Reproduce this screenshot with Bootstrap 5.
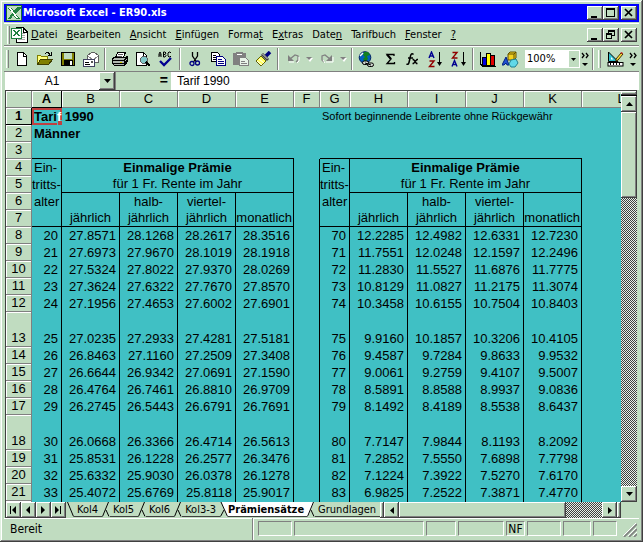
<!DOCTYPE html>
<html lang="de">
<head>
<meta charset="utf-8">
<meta name="viewport" content="width=device-width, initial-scale=1">
<title>Microsoft Excel - ER90.xls</title>
<link href="https://cdn.jsdelivr.net/npm/bootstrap@5.3.0/dist/css/bootstrap.min.css" rel="stylesheet">
<style>
:root{--face:#c0dcc0;--sea:#40c0c4;--sh:#808080;--dk:#404040;--ui:"DejaVu Sans Condensed","DejaVu Sans",sans-serif;--cell:"Liberation Sans",Arial,sans-serif}
body{background:var(--face);color:#000;font:11px/14px var(--ui)}
button,input,select{font:inherit;color:#000;padding:0;border:0;border-radius:0;background:none;min-width:0}
svg{display:block;flex:none}
.win{padding:4px;background:var(--face);box-shadow:inset -1px -1px var(--dk),inset 1px 1px #e0f0e0,inset -2px -2px var(--sh),inset 2px 2px #fff}
.titlebar{height:18px;background:#00f;color:#fff;font-weight:700;margin-bottom:1px;padding:0 2px}
.titlebar .caption{margin-left:1px}
.raised{background:var(--face);box-shadow:inset -1px -1px var(--dk),inset 1px 1px #fff,inset -2px -2px var(--sh)}
.capbtn{width:16px;height:14px}
.capbtn.closer{margin-left:2px}
.strip{border-top:1px solid #fff;border-bottom:1px solid var(--sh)}
.menubar{height:23px;padding:0 2px 0 3px}
.menubar a{color:#000;text-decoration:none}
.menus{gap:9px;margin-left:3px}
.grip{width:3px;height:18px;border-left:1px solid #fff;border-right:1px solid var(--sh);flex:none}
.toolbar{height:26px;padding-left:2px}
.tool{width:23px;height:24px;display:flex;align-items:center;justify-content:center;flex:none}
.tool.drop{width:11px}
.tool.more{width:12px}
.vsep{width:2px;height:22px;margin:0 2px;border-left:1px solid var(--sh);border-right:1px solid #fff;flex:none}
.zoomsel{width:56px;height:18px;margin-left:3px;padding-left:2px;background:#fff}
.zoomsel select{appearance:none;width:38px;flex:1}
.zoomsel span{width:10px;height:16px;margin:1px;background:var(--face);pointer-events:none}
.fbar{height:18px;font:12px/16px var(--cell);margin-left:1px}
.namebox{width:94px;background:#fff;text-align:center}
.fbar .raised{width:16px}
.eq{width:56px;padding-right:3px;text-align:right;font-weight:700;font-size:14px;border-left:1px solid var(--sh)}
.fx-in{background:#fff;padding-left:6px}
.body-frame{border-left:1px solid var(--dk);border-top:1px solid var(--dk);margin:0 2px 0 1px;min-height:0}
.sheet{background:var(--sea);min-height:0;min-width:0}
.cells{width:calc(100% + 40px);table-layout:fixed;border-collapse:separate;border-spacing:0;font:13px/16px var(--cell)}
.cells th,.cells td{padding:0;height:17px;white-space:nowrap;vertical-align:bottom}
.cells th{background:var(--face);font-weight:400;text-align:center;border-right:1px solid var(--sh);border-bottom:1px solid var(--sh);box-shadow:inset 1px 1px #fff}
.cells th.on{font-weight:700;border-right-color:#000;border-bottom-color:#000}
.cells td{text-align:right;padding-right:3px;line-height:17px}
.cells tr.tall th,.cells tr.tall td{height:35px}
.cells td.txt{text-align:left;padding-left:2px}
.cells td.mid{text-align:center;padding:0}
.cells td.fit{padding:0 1px 0 0}
.boxed td{border-right:1px solid #000}
.boxed td:last-child{border-right:0}
.cells td.ub{border-bottom:1px solid #000;line-height:16px}
.picked{left:0;top:0;width:30px;height:17px;border:2px solid #c04040}
.picked::after{content:"";position:absolute;right:-3px;bottom:-3px;width:6px;height:6px;background:#c04040;border:1px solid var(--sea)}
.edge{color:#fff;position:relative;z-index:2}
.note{font-size:11px}
.dither{background:repeating-conic-gradient(#404040 0 25%,#e8f0e8 0 50%) 0 0/2px 2px}
.vscroll{width:16px;flex:none}
.splitv{height:5px;border-bottom:1px solid #000;flex:none}
.sbtn{width:15px;height:16px;display:flex;align-items:center;justify-content:center;flex:none}
.vscroll .sbtn{width:16px}
.vthumb{height:86px}
.tabrow{height:16px;border-left:1px solid var(--dk);margin:0 2px 0 1px;flex:none}
.sheet-tab{height:15px;line-height:15px;padding:0 4px 0 3px;border-bottom:1px solid #404040;flex:none}
.sheet-tab.cur{background:#fff;font-weight:700;padding:0 3px 0 0}
.splith{width:4px;flex:none}
.hthumb{flex:168 1 0}
.htrack{flex:36 1 0}
.statusbar{height:20px;border-top:1px solid #fff;font-size:12px;padding:1px 2px 1px 6px;flex:none}
.pane{height:15px;border:1px solid var(--sh);border-right-color:#fff;border-bottom-color:#fff;line-height:14px;text-align:center;margin-right:2px;flex:none}
.w34{width:34px}.w30{width:30px}.w130{width:130px}.w46{width:46px}.w19{width:19px}.w28{width:28px}.w24{width:24px}
</style>
<script src="https://cdn.jsdelivr.net/npm/bootstrap@5.3.0/dist/js/bootstrap.bundle.min.js"></script>
</head>
<body>
<div class="win vh-100 d-flex flex-column overflow-hidden">
  <header class="titlebar d-flex align-items-center flex-shrink-0">
    <svg width="16" height="16" shape-rendering="crispEdges"><rect width="16" height="16" fill="#176b30"/><rect x="1" y="1" width="14" height="14" fill="#c0dcc0"/><path d="M2 3h4l2 3 3-4h4v1l-5 6 4 5h-4l-3-4-2 4H2l4-6z" fill="#208040"/><path d="M3 3h2l7 10h-2z" fill="#fff"/></svg>
    <span class="caption me-auto">Microsoft Excel - ER90.xls</span>
    <button class="raised capbtn" aria-label="Minimieren"><svg width="16" height="14"><path d="M4 10h6v2H4z"/></svg></button>
    <button class="raised capbtn" aria-label="Maximieren"><svg width="16" height="14" shape-rendering="crispEdges"><path d="M3.5 3.5h8v7h-8zM3 3.5h9" fill="none" stroke="#000"/><path d="M3 2h9v2H3z"/></svg></button>
    <button class="raised capbtn closer" aria-label="Schliessen"><svg width="16" height="14"><path d="M4 3l7 7M11 3l-7 7" stroke="#000" stroke-width="1.7"/></svg></button>
  </header>
  <nav class="menubar strip d-flex align-items-center flex-shrink-0">
    <span class="grip"></span>
    <svg class="ms-0" width="18" height="18" shape-rendering="crispEdges"><path d="M6 1.500h7l4 4v11H6z" fill="#fff" stroke="#000"/><path d="M13 2v4h4" fill="none" stroke="#000"/><path d="M12 7h3M12 9h3M12 11h3M8 13h7" stroke="#aaa"/><rect x="1" y="2" width="10" height="10" fill="#fff" stroke="#208040"/><path d="M3 4h2l5 6H8zM8 4h2l-5 6H3z" fill="#208040"/></svg>
    <div class="menus d-flex me-auto">
      <a href="#"><u>D</u>atei</a><a href="#"><u>B</u>earbeiten</a><a href="#"><u>A</u>nsicht</a><a href="#"><u>E</u>infügen</a><a href="#">Forma<u>t</u></a><a href="#">E<u>x</u>tras</a><a href="#">Date<u>n</u></a><a href="#">Tarifbuch</a><a href="#"><u>F</u>enster</a><a href="#"><u>?</u></a>
    </div>
    <button class="raised capbtn" aria-label="Mappe minimieren"><svg width="16" height="14"><path d="M4 10h6v2H4z"/></svg></button>
    <button class="raised capbtn" aria-label="Mappe wiederherstellen"><svg width="16" height="14" shape-rendering="crispEdges"><path d="M5.500 6V2.500h6v5H9M5 3h7M3.500 5.500h5v5h-5zM3 6h6" fill="none" stroke="#000"/></svg></button>
    <button class="raised capbtn closer" aria-label="Mappe schliessen"><svg width="16" height="14"><path d="M4 3l7 7M11 3l-7 7" stroke="#000" stroke-width="1.7"/></svg></button>
  </nav>
  <div class="toolbar strip d-flex align-items-center flex-shrink-0" role="toolbar" aria-label="Standard">
    <span class="grip me-1"></span>
    <div class="d-flex align-items-center" style="margin-left:-3px">
    <button class="tool" aria-label="Neu"><svg width="16" height="16" shape-rendering="crispEdges"><path d="M3.500 1.500h6l3 3v10h-9z" fill="#fff" stroke="#000"/><path d="M9.500 1v4h3.500" fill="none" stroke="#000"/></svg></button>
    <button class="tool" aria-label="Öffnen"><svg width="17" height="16" shape-rendering="crispEdges"><path d="M1.500 13.500v-9h3l1 1h6v3" fill="#ffff80" stroke="#808000"/><path d="M1.500 13.500l3-5h12l-4 5z" fill="#808000" stroke="#404000"/><path d="M9 3c2-3 4-1 5 1m1-3v3h-3" fill="none" stroke="#000"/></svg></button>
    <button class="tool" aria-label="Speichern"><svg width="16" height="16" shape-rendering="crispEdges"><rect x="1.500" y="1.500" width="13" height="13" fill="#808000" stroke="#000"/><rect x="4" y="2" width="8" height="6" fill="#c0dcc0"/><rect x="4" y="9" width="9" height="5" fill="#000"/><rect x="10" y="10" width="2" height="4" fill="#fff"/></svg></button>
    <button class="tool" aria-label="E-Mail"><svg width="17" height="17" shape-rendering="crispEdges"><path d="M5.500 8V4.500l4-3h3l4 3v7H13" fill="#fff" stroke="#606060"/><path d="M6 5l5 4 5-4" fill="none" stroke="#888"/><rect x="1.500" y="8.500" width="11" height="7" fill="#fff" stroke="#404060"/><path d="M3 11.500h4M3 13.500h5" stroke="#000"/><path d="M9 10h2v2H9z" fill="#555"/></svg></button>
    <span class="vsep"></span>
    <button class="tool" aria-label="Drucken"><svg width="17" height="16" shape-rendering="crispEdges"><path d="M4.500 7l2-5.500h8L12 7z" fill="#fff" stroke="#000"/><path d="M7 3.500h5M6 5.500h5" stroke="#555"/><path d="M1.500 7.500l2-1h11l2-1v5l-3 4h-10l-2-2z" fill="#b0b8b0" stroke="#000"/><path d="M2 9.500h11l3-3M2 12.500h11l3-3M13.500 9v5" fill="none" stroke="#000"/><path d="M9 11h2" stroke="#cc0"/></svg></button>
    <button class="tool" aria-label="Seitenansicht"><svg width="17" height="17" shape-rendering="crispEdges"><path d="M2.500 1.500h7l3 3v10h-10z" fill="#fff" stroke="#000"/><path d="M9 2v3h4" fill="none" stroke="#000"/><circle cx="10" cy="9" r="3.500" fill="#80c8c8" stroke="#606060"/><path d="M12 11l4 4" stroke="#000" stroke-width="2"/></svg></button>
    <button class="tool" aria-label="Rechtschreibung"><svg width="17" height="16"><path d="M2 6V3l1-2 1 2v3M2 4h2M6.500 6V1H8l1 1-1 1.500H6.500M8 3.500L9 4.500 8 6H6.500M14 2l-1-1h-1l-1 1v3l1 1h1l1-1" fill="none" stroke="#000"/><path d="M3 10l4 4 7-7" fill="none" stroke="#000090" stroke-width="2.300"/></svg></button>
    <span class="vsep"></span>
    <button class="tool" aria-label="Ausschneiden"><svg width="14" height="16"><path d="M4.500 1v4l4 6M9.500 1v4l-4 6" fill="none" stroke="#000" stroke-width="1.300"/><circle cx="4" cy="12.500" r="2" fill="none" stroke="#000080" stroke-width="1.300"/><circle cx="9.500" cy="12" r="2" fill="none" stroke="#000080" stroke-width="1.300"/></svg></button>
    <button class="tool" aria-label="Kopieren"><svg width="16" height="16" shape-rendering="crispEdges"><path d="M1.500 1.500h6l2 2v7h-8z" fill="#fff" stroke="#000"/><path d="M3 4.500h3M3 6.500h4M3 8.500h4" stroke="#000"/><path d="M6.500 5.500h6l3 3v6h-9z" fill="#fff" stroke="#000080"/><path d="M8 8.500h4M8 10.500h6M8 12.500h6" stroke="#000080"/></svg></button>
    <button class="tool" aria-label="Einfügen"><svg width="17" height="16" shape-rendering="crispEdges"><rect x="1" y="2" width="13" height="12" fill="#808080"/><path d="M4 1h7v3H4z" fill="#808080"/><path d="M5 3h5v1H5z" fill="#fff"/><path d="M7.500 6.500h6l3 3v5h-9z" fill="#e8f4e8" stroke="#808080"/><path d="M9 10.500h4M9 12.500h6" stroke="#808080"/></svg></button>
    <button class="tool" aria-label="Format übertragen"><svg width="17" height="17"><path d="M11 5l4-4" stroke="#000080" stroke-width="3.500"/><path d="M7 3l6 6" stroke="#444" stroke-width="3"/><path d="M7.500 3l5 5" stroke="#ddd" stroke-width="1"/><path d="M6 5l5 5-5 5-5-5z" fill="#ffff60" stroke="#606000"/><path d="M4 8l5 4M2 10l5 4" stroke="#fff"/></svg></button>
    <span class="vsep"></span>
    <button class="tool" aria-label="Rückgängig"><svg width="16" height="14"><path d="M3 3v6h6z" fill="#808080"/><path d="M5 7l5-4 3 1v4l-2 2" fill="none" stroke="#808080" stroke-width="1.300"/><path d="M4 10h5M14 5v4l-2 2" fill="none" stroke="#fff"/></svg></button>
    <button class="tool drop" aria-label="Rückgängig Liste"><svg width="7" height="5"><path d="M1 1h6L4 5z" fill="#fff"/><path d="M0 0h6L3 3z" fill="#808080"/></svg></button>
    <button class="tool" aria-label="Wiederholen"><svg width="16" height="14"><path d="M13 3v6H7z" fill="#808080"/><path d="M11 7L6 3 3 4v4l2 2" fill="none" stroke="#808080" stroke-width="1.300"/><path d="M7 10h7V5M4 8l2 3" fill="none" stroke="#fff"/></svg></button>
    <button class="tool drop" aria-label="Wiederholen Liste"><svg width="7" height="5"><path d="M1 1h6L4 5z" fill="#fff"/><path d="M0 0h6L3 3z" fill="#808080"/></svg></button>
    <span class="vsep"></span>
    <button class="tool" aria-label="Hyperlink"><svg width="17" height="17"><circle cx="7" cy="6.500" r="5.800" fill="#0060c0" stroke="#002060"/><path d="M6 1l4 0 2 3-3 1 1 3-3 3-2-3 2-2-2-2z" fill="#108020"/><path d="M2 5l3-3" stroke="#fff" stroke-width="1.500"/><rect x="4.500" y="10" width="6" height="3.500" rx="1.700" fill="#d0d8d0" stroke="#000"/><rect x="9.500" y="12" width="6" height="3.500" rx="1.700" fill="#d0d8d0" stroke="#000"/><path d="M7 12l6 2" stroke="#000"/></svg></button>
    <button class="tool" aria-label="AutoSumme"><svg width="14" height="16"><path d="M11 5V3.500H4L8 8l-4 4.500h7.500V11" fill="none" stroke="#000" stroke-width="1.300"/><path d="M4 3.500L8 8" stroke="#000" stroke-width="2"/></svg></button>
    <button class="tool" aria-label="Funktion"><svg width="15" height="16"><path d="M8.500 3.500C7 2 6 3 5.500 5L4 11.500C3.500 13.500 2.500 13.500 1.500 13M3 7h5" fill="none" stroke="#000" stroke-width="1.500"/><path d="M7.500 8.500h1l3 4h1M13 8.500h-1l-3.500 4h-1" fill="none" stroke="#000" stroke-width="1.300"/></svg></button>
    <button class="tool" aria-label="Aufsteigend"><svg width="16" height="17"><path d="M1 7l2.500-6L6 7M2 5h3" fill="none" stroke="#000090" stroke-width="1.400"/><path d="M1.500 10H6l-4.500 5.500H6.500" fill="none" stroke="#900000" stroke-width="1.400"/><path d="M11.500 1v11" stroke="#000"/><path d="M9 11h5l-2.500 4z"/></svg></button>
    <button class="tool" aria-label="Absteigend"><svg width="16" height="17"><path d="M1.500 1.500H6L1.500 7H6.500" fill="none" stroke="#900000" stroke-width="1.400"/><path d="M1 15.500l2.500-6 2.500 6M2 13.500h3" fill="none" stroke="#000090" stroke-width="1.400"/><path d="M12.500 1v11" stroke="#000"/><path d="M10 11h5l-2.500 4z"/></svg></button>
    <span class="vsep"></span>
    <button class="tool" aria-label="Diagramm"><svg width="17" height="16" shape-rendering="crispEdges"><path d="M1.500 1v12l2 2h13" fill="none" stroke="#000"/><path d="M3 7l1-1h3v8H3z" fill="#0000e0" stroke="#000"/><path d="M7 3l1-1h3v12H7z" fill="#ffff00" stroke="#000"/><path d="M11 5l1-1h3v10h-4z" fill="#e00000" stroke="#000"/></svg></button>
    <button class="tool" aria-label="Zeichnen"><svg width="17" height="17"><path d="M6 3l2-2h6v6l-2 2H6z" fill="#f0d020" stroke="#605000"/><path d="M6 3h6v6M12 3l2-2" fill="none" stroke="#605000"/><path d="M0 14L4 6l3 8H5l-1-2-2 2z" fill="#2050d0" stroke="#002080"/><path d="M9 9l5-1 2 4-3 4H9l-2-3z" fill="#60d8e8" stroke="#208090"/></svg></button>
    </div>
    <div class="zoomsel d-flex align-items-center"><select aria-label="Zoom"><option>100%</option></select><span class="d-flex align-items-center justify-content-center"><svg width="5" height="3"><path d="M0 0h5L2.500 3z"/></svg></span></div>
    <button class="tool more" aria-label="Weitere"><svg width="9" height="16"><path d="M1 2l2 2.500L1 7M5 2l2 2.500L5 7" fill="none" stroke="#000" stroke-width="1.300"/><path d="M1 12h6l-3 3z"/></svg></button>
    <span class="vsep ms-0 me-1"></span>
    <span class="grip"></span>
    <button class="tool ms-1 flex-shrink-1" aria-label="Zeichnungsleiste"><svg width="17" height="16"><path d="M1.500 1v9.500H11z" fill="#30c0d0" stroke="#000"/><path d="M4 6v2.500h2.500z" fill="#fff"/><path d="M9 8l5-6 2 1-5 6-2 1z" fill="#ffe040" stroke="#403000"/><path d="M13 2l2-1 1 2" fill="#d02020"/><rect x="1" y="11.500" width="15" height="3.500" fill="#fff" stroke="#000"/><path d="M3.500 12v2M6.500 12v2M9.500 12v2M12.500 12v2" stroke="#000"/></svg></button>
    <button class="tool more ms-auto" aria-label="Weitere"><svg width="9" height="16"><path d="M1 2l2 2.500L1 7M5 2l2 2.500L5 7" fill="none" stroke="#000" stroke-width="1.300"/><path d="M1 12h6l-3 3z"/></svg></button>
  </div>
  <div class="fbar d-flex flex-shrink-0">
    <input class="namebox" value="A1" aria-label="Namenfeld">
    <button class="raised d-flex align-items-center justify-content-center" aria-label="Namen"><svg width="7" height="4"><path d="M0 0h7L3.500 4z"/></svg></button>
    <div class="eq">=</div>
    <input class="fx-in flex-grow-1" value="Tarif 1990" aria-label="Bearbeitungsleiste">
  </div>
  <main class="body-frame d-flex flex-grow-1">
    <div class="sheet flex-grow-1 overflow-hidden">
      <table class="cells">
        <colgroup><col style="width:26px"><col style="width:30px"><col style="width:58px"><col style="width:58px"><col style="width:58px"><col style="width:58px"><col style="width:26px"><col style="width:30px"><col style="width:58px"><col style="width:58px"><col style="width:58px"><col style="width:58px"><col></colgroup>
        <thead><tr><th></th><th class="on">A</th><th>B</th><th>C</th><th>D</th><th>E</th><th>F</th><th>G</th><th>H</th><th>I</th><th>J</th><th>K</th><th>L</th></tr></thead>
        <tbody>
          <tr><th class="on">1</th><td class="txt fw-bold position-relative"><div class="picked position-absolute"></div>Tari<span class="edge">f</span> 1990</td><td colspan="5"></td><td class="txt note" colspan="6">Sofort beginnende Leibrente ohne Rückgewähr</td></tr>
          <tr><th>2</th><td class="txt fw-bold">Männer</td><td colspan="11"></td></tr>
          <tr><th>3</th><td class="ub" colspan="5"></td><td></td><td class="ub" colspan="5"></td><td></td></tr>
        </tbody>
        <tbody class="boxed">
          <tr><th>4</th><td class="txt">Ein-</td><td class="mid fw-bold" colspan="4">Einmalige Prämie</td><td></td><td class="txt">Ein-</td><td class="mid fw-bold" colspan="4">Einmalige Prämie</td><td></td></tr>
          <tr><th>5</th><td class="txt fit">tritts-</td><td class="mid ub" colspan="4">für 1 Fr. Rente im Jahr</td><td></td><td class="txt fit">tritts-</td><td class="mid ub" colspan="4">für 1 Fr. Rente im Jahr</td><td></td></tr>
          <tr><th>6</th><td class="txt">alter</td><td></td><td class="mid">halb-</td><td class="mid">viertel-</td><td></td><td></td><td class="txt">alter</td><td></td><td class="mid">halb-</td><td class="mid">viertel-</td><td></td><td></td></tr>
          <tr><th>7</th><td class="ub"></td><td class="mid ub">jährlich</td><td class="mid ub">jährlich</td><td class="mid ub">jährlich</td><td class="fit ub">monatlich</td><td></td><td class="ub"></td><td class="mid ub">jährlich</td><td class="mid ub">jährlich</td><td class="mid ub">jährlich</td><td class="fit ub">monatlich</td><td></td></tr>
        </tbody>
        <tbody class="boxed" id="rates"></tbody>
      </table>
    </div>
    <div class="vscroll d-flex flex-column">
      <div class="splitv raised"></div>
      <button class="sbtn raised" aria-label="Nach oben"><svg width="7" height="4"><path d="M0 4h7L3.500 0z"/></svg></button>
      <div class="vthumb raised flex-shrink-0"></div>
      <div class="dither flex-grow-1"></div>
      <button class="sbtn raised" aria-label="Nach unten"><svg width="7" height="4"><path d="M0 0h7L3.500 4z"/></svg></button>
    </div>
  </main>
  <div class="tabrow d-flex">
    <button class="sbtn raised" aria-label="Erstes Blatt"><svg width="9" height="8"><path d="M1 0h1v8H1zM7 0v8L3 4z"/></svg></button>
    <button class="sbtn raised" aria-label="Voriges Blatt"><svg width="5" height="8"><path d="M4 0v8L0 4z"/></svg></button>
    <button class="sbtn raised" aria-label="Nächstes Blatt"><svg width="5" height="8"><path d="M0 0v8l4-4z"/></svg></button>
    <button class="sbtn raised" aria-label="Letztes Blatt"><svg width="9" height="8"><path d="M6 0h1v8H6zM1 0v8l4-4z"/></svg></button>
    <svg width="8" height="15"><path d="M1.500 0l6 14.500" stroke="#000"/></svg>
    <button class="sheet-tab">Kol4</button>
    <svg width="8" height="15"><path d="M6.500 0L.5 14.500M4 8l3 6.500" stroke="#000"/></svg>
    <button class="sheet-tab">Kol5</button>
    <svg width="8" height="15"><path d="M6.500 0L.5 14.500M4 8l3 6.500" stroke="#000"/></svg>
    <button class="sheet-tab">Kol6</button>
    <svg width="8" height="15"><path d="M6.500 0L.5 14.500M4 8l3 6.500" stroke="#000"/></svg>
    <button class="sheet-tab">Kol3-3</button>
    <svg width="8" height="15"><path d="M1 0h7v15H7z" fill="#fff"/><path d="M1 0l6.500 14.500M4 8L.5 14.500" stroke="#000"/></svg>
    <button class="sheet-tab cur">Prämiensätze</button>
    <svg width="8" height="15"><path d="M0 0h7L1 15H0z" fill="#fff"/><path d="M6.500 0L.5 14.500M4 8l3 6.500" stroke="#000"/></svg>
    <button class="sheet-tab">Grundlagen</button>
    <div class="splith raised"></div>
    <button class="sbtn raised" aria-label="Nach links"><svg width="4" height="7"><path d="M4 0v7L0 3.500z"/></svg></button>
    <div class="hthumb raised"></div>
    <div class="htrack dither"></div>
    <button class="sbtn raised" aria-label="Nach rechts"><svg width="4" height="7"><path d="M0 0v7l4-3.500z"/></svg></button>
    <div class="splith raised"></div>
    <div class="vscroll"></div>
  </div>
  <footer class="statusbar d-flex align-items-center">
    <span class="me-auto">Bereit</span>
    <span class="vsep me-1"></span>
    <span class="pane w34"></span><span class="pane w130"></span><span class="pane w30"></span><span class="pane w46"></span><span class="pane w19">NF</span><span class="pane w34"></span><span class="pane w28"></span><span class="pane w24"></span>
    <svg class="ms-1 align-self-end" width="14" height="14"><path d="M1 14L14 1M6 14l8-8M11 14l3-3" stroke="#808080" stroke-width="1.700"/><path d="M0 13L13 0M5 13l8-8M10 13l4-4" stroke="#fff"/></svg>
  </footer>
</div>
<script>
const rates = [
 [20,27.8571,28.1268,28.2617,28.3516, 70,12.2285,12.4982,12.6331,12.7230],
 [21,27.6973,27.9670,28.1019,28.1918, 71,11.7551,12.0248,12.1597,12.2496],
 [22,27.5324,27.8022,27.9370,28.0269, 72,11.2830,11.5527,11.6876,11.7775],
 [23,27.3624,27.6322,27.7670,27.8570, 73,10.8129,11.0827,11.2175,11.3074],
 [24,27.1956,27.4653,27.6002,27.6901, 74,10.3458,10.6155,10.7504,10.8403],
 [25,27.0235,27.2933,27.4281,27.5181, 75,9.9160,10.1857,10.3206,10.4105],
 [26,26.8463,27.1160,27.2509,27.3408, 76,9.4587,9.7284,9.8633,9.9532],
 [27,26.6644,26.9342,27.0691,27.1590, 77,9.0061,9.2759,9.4107,9.5007],
 [28,26.4764,26.7461,26.8810,26.9709, 78,8.5891,8.8588,8.9937,9.0836],
 [29,26.2745,26.5443,26.6791,26.7691, 79,8.1492,8.4189,8.5538,8.6437],
 [30,26.0668,26.3366,26.4714,26.5613, 80,7.7147,7.9844,8.1193,8.2092],
 [31,25.8531,26.1228,26.2577,26.3476, 81,7.2852,7.5550,7.6898,7.7798],
 [32,25.6332,25.9030,26.0378,26.1278, 82,7.1224,7.3922,7.5270,7.6170],
 [33,25.4072,25.6769,25.8118,25.9017, 83,6.9825,7.2522,7.3871,7.4770]
];
document.getElementById("rates").innerHTML = rates.map((r, i) => {
  const td = r.map((v, c) => "<td>" + (c % 5 ? v.toFixed(4) : v) + "</td>");
  td.splice(5, 0, "<td></td>");
  return `<tr${i && i % 5 === 0 ? ' class="tall"' : ""}><th>${i + 8}</th>${td.join("")}<td></td></tr>`;
}).join("") + "<tr><th></th>" + "<td></td>".repeat(12) + "</tr>";
</script>
</body>
</html>
